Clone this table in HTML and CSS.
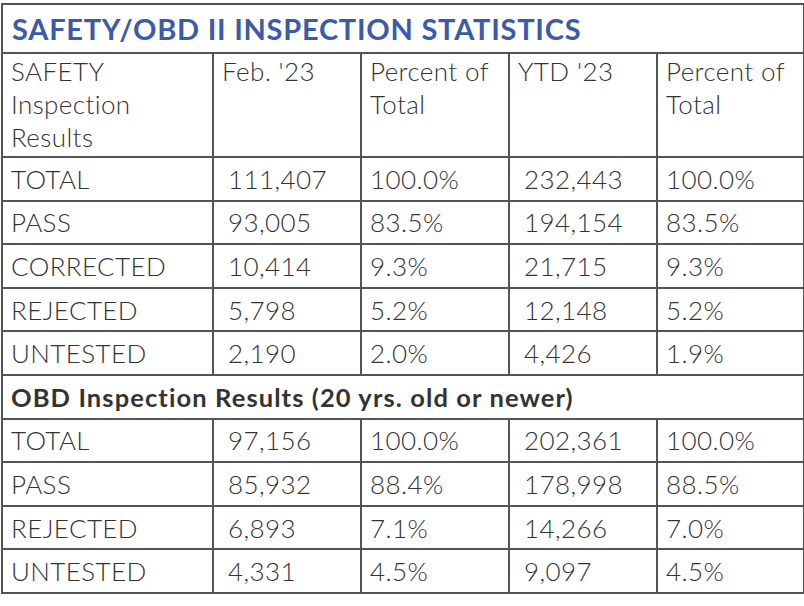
FILE: index.html
```html
<!DOCTYPE html>
<html>
<head>
<meta charset="utf-8">
<link rel="stylesheet" href="styles.css">
</head>
<body>
<table class="stats">
  <colgroup>
    <col class="c-label"><col class="c-num"><col class="c-num"><col class="c-num"><col class="c-last">
  </colgroup>
  <tr class="title-row"><td colspan="5">SAFETY/OBD II INSPECTION STATISTICS</td></tr>
  <tr class="head-row">
    <td>SAFETY Inspection Results</td>
    <td>Feb. '23</td>
    <td>Percent of Total</td>
    <td>YTD '23</td>
    <td>Percent of Total</td>
  </tr>
  <tr><td>TOTAL</td><td class="n">111,407</td><td>100.0%</td><td class="n">232,443</td><td>100.0%</td></tr>
  <tr><td>PASS</td><td class="n">93,005</td><td>83.5%</td><td class="n">194,154</td><td>83.5%</td></tr>
  <tr><td>CORRECTED</td><td class="n">10,414</td><td>9.3%</td><td class="n">21,715</td><td>9.3%</td></tr>
  <tr><td>REJECTED</td><td class="n">5,798</td><td>5.2%</td><td class="n">12,148</td><td>5.2%</td></tr>
  <tr><td>UNTESTED</td><td class="n">2,190</td><td>2.0%</td><td class="n">4,426</td><td>1.9%</td></tr>
  <tr class="section-row"><td colspan="5">OBD Inspection Results (20 yrs. old or newer)</td></tr>
  <tr><td>TOTAL</td><td class="n">97,156</td><td>100.0%</td><td class="n">202,361</td><td>100.0%</td></tr>
  <tr><td>PASS</td><td class="n">85,932</td><td>88.4%</td><td class="n">178,998</td><td>88.5%</td></tr>
  <tr><td>REJECTED</td><td class="n">6,893</td><td>7.1%</td><td class="n">14,266</td><td>7.0%</td></tr>
  <tr><td>UNTESTED</td><td class="n">4,331</td><td>4.5%</td><td class="n">9,097</td><td>4.5%</td></tr>
</table>
</body>
</html>
```
FILE: styles.css
```css
html, body {
  margin: 0;
  padding: 0;
  background: #ffffff;
}
body {
  padding: 3px 0 0 1px;
}
.stats {
  border-collapse: collapse;
  table-layout: fixed;
  width: 802px;
  font-family: "Lato", "Liberation Sans", sans-serif;
  font-size: 26px;
  font-weight: 300;
  letter-spacing: 0.4px;
  color: #333333;
  border: 2px solid #555555;
}
.c-label { width: 211px; }
.c-num { width: 148px; }
.c-last { width: 147px; }
.stats td {
  border: 2px solid #555555;
  padding: 0 0 0 8px;
  height: 41.6px;
  line-height: 32px;
  vertical-align: middle;
  text-align: left;
  white-space: nowrap;
}
.stats td.n {
  padding-left: 14px;
}
.title-row td {
  height: 47px;
  color: #3b5ba9;
  font-weight: 700;
  font-size: 29px;
  letter-spacing: 0.75px;
  padding-left: 9px;
}
.head-row td {
  height: 101px;
  vertical-align: top;
  white-space: normal;
  line-height: 33px;
  padding-top: 1px;
  padding-right: 4px;
}
.section-row td {
  font-weight: 700;
  font-size: 25.5px;
  letter-spacing: 1.1px;
}
```
